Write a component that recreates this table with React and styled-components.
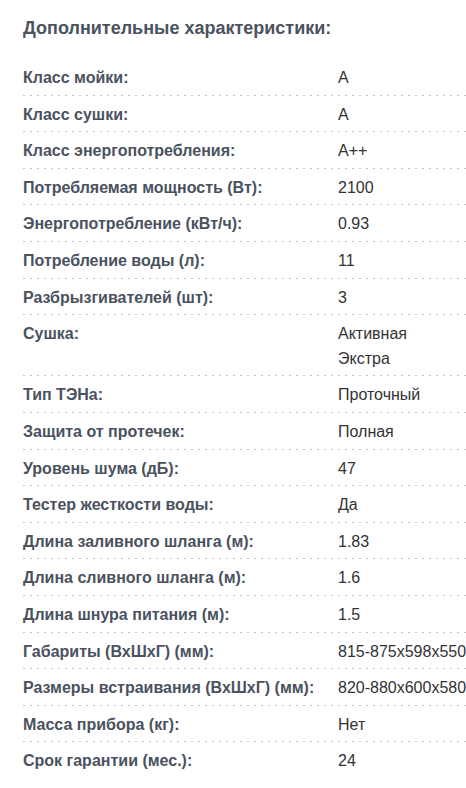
import React from 'react';
import styled, { createGlobalStyle } from 'styled-components';

const GlobalStyle = createGlobalStyle`
  body {
    margin: 0;
    background: #fff;
    font-family: "Liberation Sans", Arial, sans-serif;
  }
`;

const Section = styled.section`
  padding: 17px 0 0 23px;
  width: 466px;
  box-sizing: border-box;
`;

const Title = styled.h2`
  margin: 0 0 20px 0;
  font-size: 18px;
  line-height: 22px;
  font-weight: 700;
  color: #4a5260;
`;

const SpecList = styled.dl`
  margin: 0;
`;

const SpecRow = styled.div`
  display: grid;
  grid-template-columns: 315px 1fr;
  padding: 7px 0 5px;
  background-image: ${({ $last }) =>
    $last ? 'none' : 'linear-gradient(to right, #c4c4c4 2px, transparent 2px)'};
  background-size: 7px 1px;
  background-repeat: repeat-x;
  background-position: left bottom;
`;

const Label = styled.dt`
  margin: 0;
  font-size: 16px;
  line-height: 24.6px;
  font-weight: 700;
  color: #4a5260;
`;

const Value = styled.dd`
  margin: 0;
  font-size: 16px;
  line-height: 24.6px;
  color: #333;
  white-space: nowrap;
`;

const specs = [
  ['Класс мойки:', ['A']],
  ['Класс сушки:', ['A']],
  ['Класс энергопотребления:', ['A++']],
  ['Потребляемая мощность (Вт):', ['2100']],
  ['Энергопотребление (кВт/ч):', ['0.93']],
  ['Потребление воды (л):', ['11']],
  ['Разбрызгивателей (шт):', ['3']],
  ['Сушка:', ['Активная', 'Экстра']],
  ['Тип ТЭНа:', ['Проточный']],
  ['Защита от протечек:', ['Полная']],
  ['Уровень шума (дБ):', ['47']],
  ['Тестер жесткости воды:', ['Да']],
  ['Длина заливного шланга (м):', ['1.83']],
  ['Длина сливного шланга (м):', ['1.6']],
  ['Длина шнура питания (м):', ['1.5']],
  ['Габариты (ВхШхГ) (мм):', ['815-875x598x550']],
  ['Размеры встраивания (ВхШхГ) (мм):', ['820-880x600x580']],
  ['Масса прибора (кг):', ['Нет']],
  ['Срок гарантии (мес.):', ['24']],
];

const App = () => {
  return (
    <>
      <GlobalStyle />
      <Section>
        <Title>Дополнительные характеристики:</Title>
        <SpecList>
          {specs.map(([label, values], i) => (
            <SpecRow key={label} $last={i === specs.length - 1}>
              <Label>{label}</Label>
              <Value>
                {values.map(v => (
                  <div key={v}>{v}</div>
                ))}
              </Value>
            </SpecRow>
          ))}
        </SpecList>
      </Section>
    </>
  );
};

export default App;
